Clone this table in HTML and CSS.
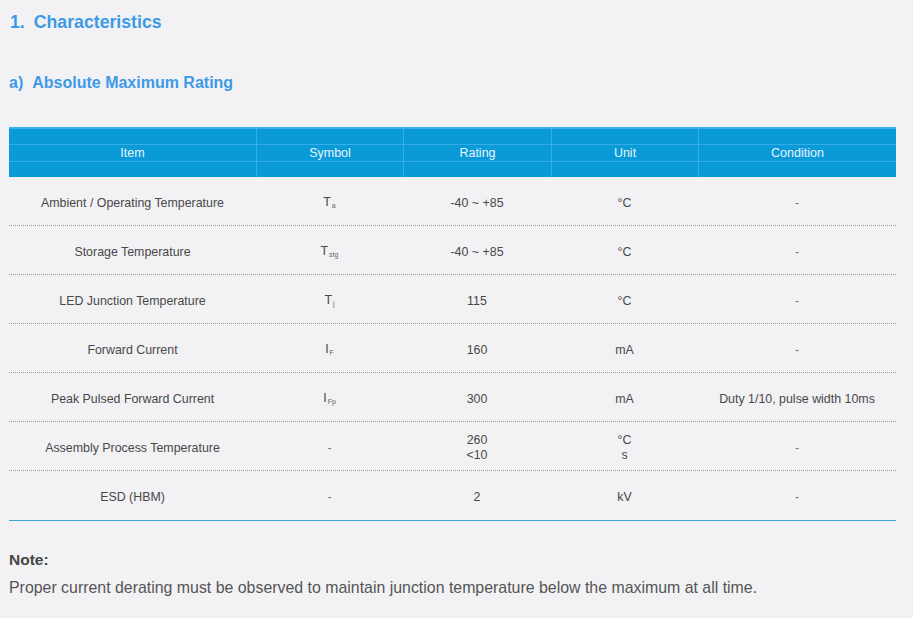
FILE: index.html
```html
<!DOCTYPE html>
<html>
<head>
<meta charset="utf-8">
<link rel="stylesheet" href="styles.css">
</head>
<body>
<div class="page">
  <h1 class="title"><span class="num">1.</span>Characteristics</h1>
  <h2 class="subtitle"><span class="num">a)</span>Absolute Maximum Rating</h2>
  <div class="table">
    <div class="head">
      <div class="hc">Item</div>
      <div class="hc">Symbol</div>
      <div class="hc">Rating</div>
      <div class="hc">Unit</div>
      <div class="hc">Condition</div>
    </div>
    <div class="row">
      <div class="c">Ambient / Operating Temperature</div>
      <div class="c"><span class="sym">T<sub>a</sub></span></div>
      <div class="c">-40 ~ +85</div>
      <div class="c">°C</div>
      <div class="c dash">-</div>
    </div>
    <div class="row">
      <div class="c">Storage Temperature</div>
      <div class="c"><span class="sym">T<sub>stg</sub></span></div>
      <div class="c">-40 ~ +85</div>
      <div class="c">°C</div>
      <div class="c dash">-</div>
    </div>
    <div class="row">
      <div class="c">LED Junction Temperature</div>
      <div class="c"><span class="sym">T<sub>j</sub></span></div>
      <div class="c">115</div>
      <div class="c">°C</div>
      <div class="c dash">-</div>
    </div>
    <div class="row">
      <div class="c">Forward Current</div>
      <div class="c"><span class="sym">I<sub>F</sub></span></div>
      <div class="c">160</div>
      <div class="c">mA</div>
      <div class="c dash">-</div>
    </div>
    <div class="row">
      <div class="c">Peak Pulsed Forward Current</div>
      <div class="c"><span class="sym">I<sub>Fp</sub></span></div>
      <div class="c">300</div>
      <div class="c">mA</div>
      <div class="c">Duty 1/10, pulse width 10ms</div>
    </div>
    <div class="row">
      <div class="c">Assembly Process Temperature</div>
      <div class="c dash">-</div>
      <div class="c stack"><span>260</span><span>&lt;10</span></div>
      <div class="c stack"><span>°C</span><span>s</span></div>
      <div class="c dash">-</div>
    </div>
    <div class="row last">
      <div class="c">ESD (HBM)</div>
      <div class="c dash">-</div>
      <div class="c">2</div>
      <div class="c">kV</div>
      <div class="c dash">-</div>
    </div>
  </div>
  <div class="note">
    <div class="note-title">Note:</div>
    <p class="note-text">Proper current derating must be observed to maintain junction temperature below the maximum at all time.</p>
  </div>
</div>
</body>
</html>
```
FILE: styles.css
```css
html, body {
  margin: 0;
  padding: 0;
  background: #f2f2f4;
}
body {
  font-family: "Liberation Sans", Arial, sans-serif;
  color: #444;
}
.page {
  padding: 0 17px 0 9px;
}
.title {
  margin: 0;
  padding-top: 12px;
  height: 21px;
  font-size: 17.7px;
  line-height: 21px;
  font-weight: bold;
  color: #3d9ae6;
  padding-left: 1px;
}
.subtitle {
  margin: 0;
  margin-top: 40px;
  height: 20px;
  font-size: 16px;
  line-height: 20px;
  font-weight: bold;
  color: #3d9ae6;
}
.num {
  margin-right: 9px;
}
.table {
  margin-top: 34px;
}
.head, .row {
  display: grid;
  grid-template-columns: 247px 147px 148px 147px 198px;
}
.head {
  height: 50px;
  background-color: #0a9ad8;
  border-top: 2px solid #3ab2ec;
  box-sizing: border-box;
  background-image: linear-gradient(to bottom,
    transparent 15px, #33aee8 15px, #33aee8 16px, transparent 16px,
    transparent 32px, #33aee8 32px, #33aee8 33px, transparent 33px);
}
.hc {
  display: flex;
  align-items: center;
  justify-content: center;
  color: #e6f4fc;
  font-size: 12.5px;
  border-left: 1px solid #33aee8;
}
.hc:first-child {
  border-left: none;
}
.row {
  height: 49px;
  border-bottom: 1px dotted #9a9a9a;
  box-sizing: border-box;
}
.row.last {
  border-bottom: 1px solid #3aa9d6;
  height: 50px;
}
.c {
  display: flex;
  align-items: center;
  justify-content: center;
  padding-top: 3px;
  font-size: 12.4px;
  color: #484848;
  text-align: center;
}
.sym {
  line-height: 15px;
}
.sym sub {
  font-size: 7px;
  line-height: 0;
  vertical-align: -2px;
  margin-left: 1px;
  color: #666;
}
.c.dash {
  color: #777;
}
.stack {
  flex-direction: column;
  line-height: 15px;
}
.note {
  margin-top: 29px;
}
.note-title {
  font-size: 15.5px;
  font-weight: bold;
  color: #454545;
  line-height: 20px;
}
.note-text {
  margin: 8px 0 0 0;
  font-size: 15.9px;
  line-height: 20px;
  color: #555;
}
```
